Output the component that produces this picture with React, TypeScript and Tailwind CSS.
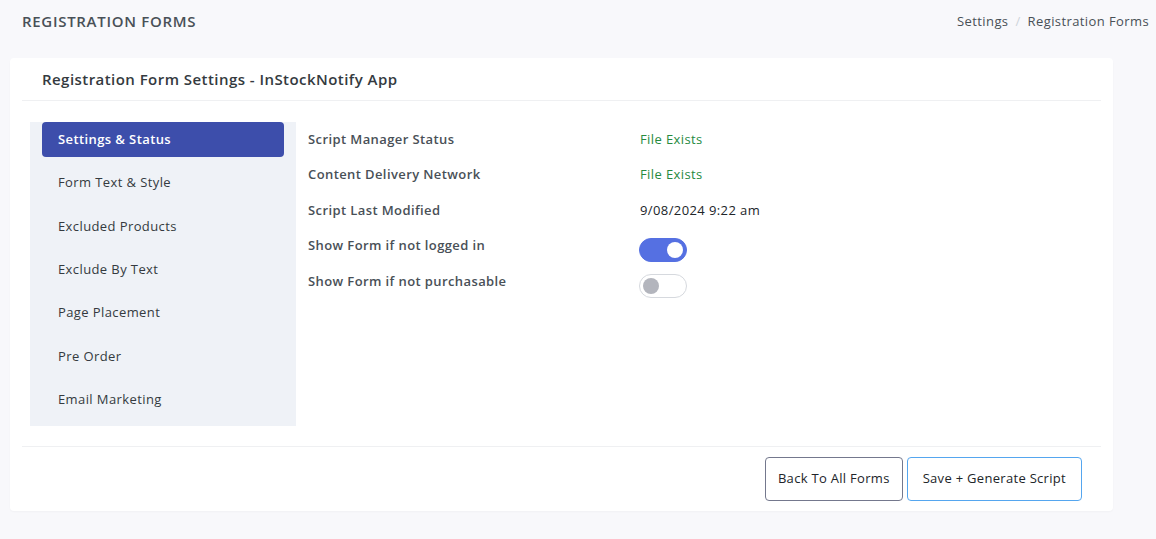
import React, { useState } from 'react';

const menu = [
  'Settings & Status',
  'Form Text & Style',
  'Excluded Products',
  'Exclude By Text',
  'Page Placement',
  'Pre Order',
  'Email Marketing',
];

const Toggle: React.FC<{ on: boolean; onChange: () => void }> = ({ on, onChange }) => (
  <button
    onClick={onChange}
    className={`w-[48px] h-[24px] rounded-full border flex items-center px-[3px] ${
      on ? 'bg-[#5570e2] border-[#5570e2] justify-end' : 'bg-white border-[#d6d9de] justify-start'
    }`}
  >
    <span className={`w-[16px] h-[16px] rounded-full ${on ? 'bg-white' : 'bg-[#b3b5bd]'}`}></span>
  </button>
);

export default function App() {
  const [active, setActive] = useState(0);
  const [loggedIn, setLoggedIn] = useState(true);
  const [purchasable, setPurchasable] = useState(false);

  return (
    <div className="min-h-[539px] bg-[#f8f8fb] font-['Open_Sans',sans-serif] text-[#495057] tracking-[0.4px]">
      {/* Page title + breadcrumb */}
      <div className="flex items-center justify-between h-[42px] pl-[22px] pr-[7px] pt-[1px]">
        <h4 className="text-[15px] font-semibold uppercase text-[#495057] tracking-[0.7px]">Registration Forms</h4>
        <div className="flex items-center text-[13px] text-[#495057]">
          <span>Settings</span>
          <span className="mx-[7px] text-[#ced4da]">/</span>
          <span>Registration Forms</span>
        </div>
      </div>

      <div className="pt-[16px] pl-[10px] pr-[43px] pb-[28px]">
        <div className="bg-white rounded-[4px] shadow-[0_1px_2px_rgba(0,0,0,0.03)] px-[12px]">
          {/* Card header */}
          <div className="h-[43px] flex items-center pl-[20px] border-b border-[#eff0f2]">
            <h5 className="text-[15px] font-semibold text-[#343a40] tracking-[0.45px]">Registration Form Settings - InStockNotify App</h5>
          </div>

          {/* Body */}
          <div className="flex pt-[21px] pb-[20px] pl-[8px]">
            <div className="w-[266px] bg-[#eff2f7] px-[12px]">
              {menu.map((m, i) => (
                <div
                  key={m}
                  onClick={() => setActive(i)}
                  className={`h-[35px] mb-[8.4px] flex items-center pl-[16px] rounded-[4px] text-[13px] cursor-pointer ${
                    i === active ? 'bg-[#3d4eab] text-white font-semibold' : 'text-[#343a40] font-medium'
                  }`}
                >
                  {m}
                </div>
              ))}
            </div>

            <div className="flex-1 pl-[12px] pt-[8px] text-[13px]">
              <div className="grid grid-cols-[332px_1fr]">
                <div className="h-[35px] font-semibold text-[#495057]">Script Manager Status</div>
                <div className="h-[35px] text-[#268a3f]">File Exists</div>
                <div className="h-[36px] font-semibold text-[#495057]">Content Delivery Network</div>
                <div className="h-[36px] text-[#268a3f]">File Exists</div>
                <div className="h-[35px] font-semibold text-[#495057]">Script Last Modified</div>
                <div className="h-[35px] text-[#212529]">9/08/2024 9:22 am</div>
                <div className="h-[36px] font-semibold text-[#495057]">Show Form if not logged in</div>
                <div className="h-[36px] pt-[2px] -ml-[1px]">
                  <Toggle on={loggedIn} onChange={() => setLoggedIn(!loggedIn)} />
                </div>
                <div className="h-[36px] font-semibold text-[#495057]">Show Form if not purchasable</div>
                <div className="h-[36px] pt-[2px] -ml-[1px]">
                  <Toggle on={purchasable} onChange={() => setPurchasable(!purchasable)} />
                </div>
              </div>
            </div>
          </div>

          {/* Footer */}
          <div className="border-t border-[#eff0f2] flex justify-end gap-[4px] pt-[10px] pb-[10px] pr-[19px]">
            <button className="h-[44px] px-[12px] rounded-[4px] border border-[#74788d] text-[13px] text-[#212529] tracking-[0.3px]">
              Back To All Forms
            </button>
            <button className="h-[44px] px-[15px] rounded-[4px] border border-[#55a6ef] text-[13px] text-[#212529] tracking-[0.3px]">
              Save + Generate Script
            </button>
          </div>
        </div>
      </div>
    </div>
  );
}
